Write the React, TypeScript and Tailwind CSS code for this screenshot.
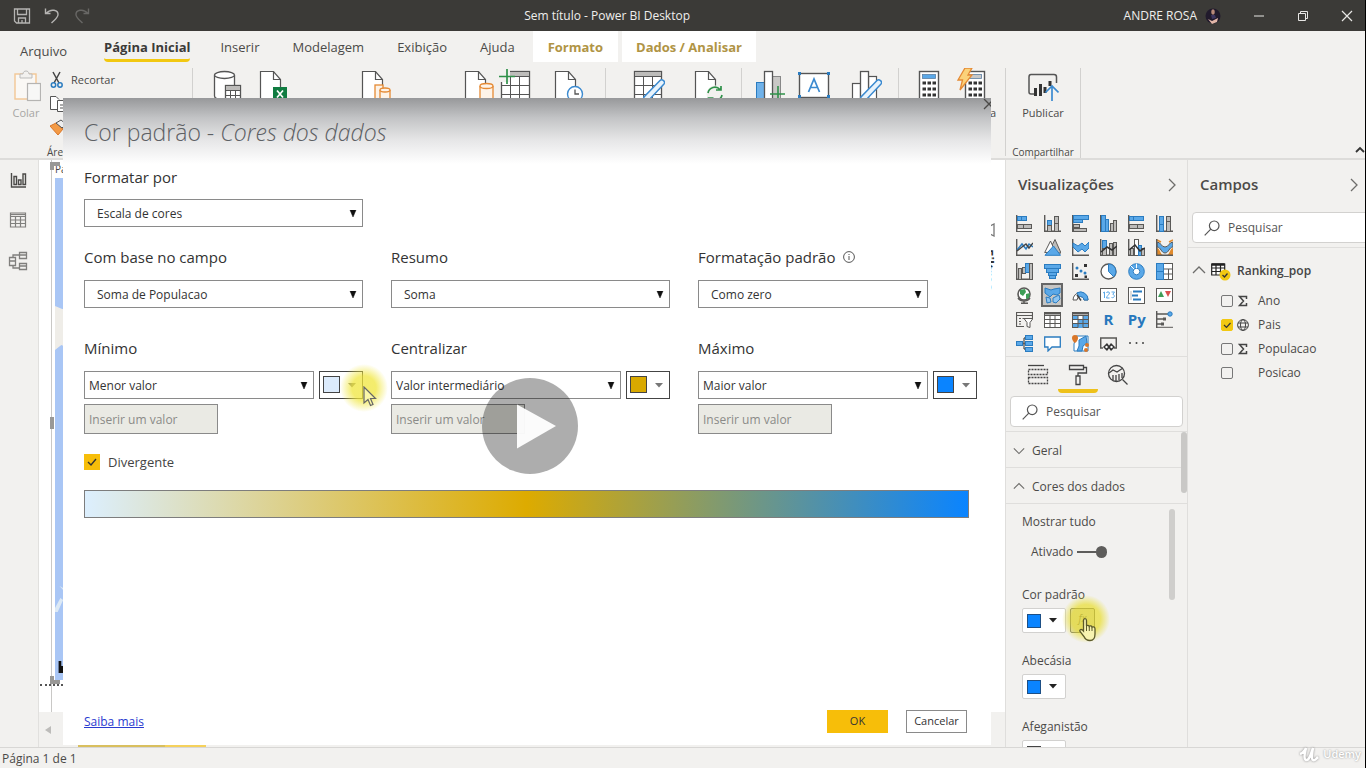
import React from "react";

const BLUE = "#5aa8e8";
const EDGE = "#2b7cc0";
const INK = "#5a5957";
const SOFT = "#bdbcba";

type BoxProps = { x: number; y: number; w: number; h: number; kind?: "blue" | "gray" | "none" };

function Box({ x, y, w, h, kind = "none" }: BoxProps) {
  const fill = kind === "blue" ? BLUE : kind === "gray" ? SOFT : "none";
  const stroke = kind === "blue" ? EDGE : INK;
  return <rect x={x + 0.5} y={y + 0.5} width={w - 1} height={h - 1} fill={fill} stroke={stroke} />;
}

function Axis({ full = true }: { full?: boolean }) {
  return <path d={full ? "M.7 0V16.3H17" : "M.7 0V17"} fill="none" stroke={INK} strokeWidth="1.4" />;
}

const visuals: { name: string; art?: React.ReactNode; glyph?: string }[] = [
  { name: "Barras empilhadas", art: <><Axis full={false} /><Box x={1} y={1} w={5} h={5} kind="blue" /><Box x={5} y={1} w={6} h={5} kind="blue" /><Box x={1} y={9} w={7} h={5} kind="gray" /><Box x={7} y={9} w={9} h={5} kind="gray" /><path d="M0 16.500h16" stroke={INK} /></> },
  { name: "Colunas empilhadas", art: <><Axis /><Box x={3} y={5} w={5} h={6} kind="blue" /><Box x={3} y={10} w={5} h={7} kind="gray" /><Box x={10} y={1} w={5} h={8} kind="gray" /><Box x={10} y={8} w={5} h={9} kind="gray" /></> },
  { name: "Barras clusterizadas", art: <><Axis full={false} /><Box x={1} y={0} w={16} h={5} kind="blue" /><Box x={1} y={4} w={10} h={4} kind="blue" /><Box x={1} y={9} w={7} h={4} kind="gray" /><Box x={1} y={13} w={14} h={4} kind="gray" /></> },
  { name: "Colunas clusterizadas", art: <><Axis /><Box x={1} y={0} w={5} h={17} kind="blue" /><Box x={5} y={4} w={4} h={13} kind="blue" /><Box x={10} y={8} w={4} h={9} kind="gray" /><Box x={13} y={5} w={4} h={12} kind="gray" /></> },
  { name: "Barras 100%", art: <><Axis full={false} /><Box x={1} y={1} w={5} h={5} kind="blue" /><Box x={5} y={1} w={11} h={5} kind="blue" /><Box x={1} y={9} w={9} h={5} kind="gray" /><Box x={9} y={9} w={7} h={5} kind="gray" /><path d="M0 16.500h16" stroke={INK} /></> },
  { name: "Colunas 100%", art: <><Axis /><Box x={3} y={1} w={5} h={9} kind="blue" /><Box x={3} y={9} w={5} h={8} kind="blue" /><Box x={10} y={1} w={5} h={6} kind="gray" /><Box x={10} y={6} w={5} h={11} kind="gray" /></> },

  { name: "Linhas", art: <><Axis /><path d="M1 11l5-6 4 5 3-5 4 3" fill="none" stroke={EDGE} strokeWidth="1.500" /><path d="M1 12l5-4 4-3 3 4 4-5" fill="none" stroke="#444" strokeWidth="1.400" /></> },
  { name: "Área", art: <><path d="M4 14L11 .5 17 14z" fill={SOFT} stroke={INK} /><path d="M.7 13.500L6.500 2l5 11z" fill="#fff" stroke={INK} /><path d="M1 16.300L9.500 7l7 9.300z" fill={BLUE} stroke={EDGE} /></> },
  { name: "Área empilhada", art: <><Axis /><path d="M1 4l5 3 4-3 3 3 4-4v6l-4 4-3-3-4 3-5-5z" fill={BLUE} stroke={EDGE} /></> },
  { name: "Linha e coluna empilhada", art: <><Axis /><Box x={2} y={1} w={5} h={9} kind="blue" /><Box x={2} y={9} w={5} h={8} kind="gray" /><Box x={9} y={4} w={4} h={13} kind="gray" /><Box x={13} y={3} w={4} h={14} kind="gray" /><path d="M1 13l6-5 5 3 5-4" fill="none" stroke="#333" strokeWidth="1.500" /></> },
  { name: "Linha e coluna clusterizada", art: <><Axis /><Box x={2} y={9} w={4} h={8} kind="gray" /><rect x="6.500" y=".5" width="4" height="16" fill="#fff" stroke={INK} /><Box x={10} y={6} w={4} h={11} kind="blue" /><Box x={13} y={9} w={4} h={8} kind="gray" /><path d="M1 11l6-5 5 6 5-3" fill="none" stroke="#333" strokeWidth="1.500" /></> },
  { name: "Faixa de opções", art: <><path d="M1 9v7h6c-3-1-3-7-6-7zM17 9v7h-6c3-1 3-7 6-7z" fill="#e08a2c" /><path d="M1 3c4 0 4 5 8 5s4-5 8-5v5c-4 0-4 6-8 6s-4-6-8-6z" fill={BLUE} stroke={INK} /><path d="M1 1l4 2M13 3l4-2" fill="none" stroke="#e08a2c" strokeWidth="1.500" /><Axis /></> },

  { name: "Cascata", art: <><Axis /><Box x={2} y={5} w={4} h={12} kind="gray" /><Box x={6} y={4} w={4} h={7} kind="gray" /><Box x={9} y={0} w={5} h={10} kind="blue" /><Box x={13} y={0} w={4} h={17} kind="gray" /></> },
  { name: "Funil", art: <><Box x={0} y={1} w={17} h={5} kind="blue" /><Box x={2} y={5} w={13} h={5} kind="blue" /><Box x={4} y={9} w={9} h={4} kind="blue" /><Box x={5} y={12} w={7} h={4} kind="blue" /></> },
  { name: "Dispersão", art: <><Axis /><g fill={EDGE}><circle cx="5" cy="5" r="1.500" /><circle cx="9" cy="8" r="1.500" /><circle cx="13" cy="10" r="1.500" /></g><g fill="#333"><rect x="12" y="1" width="3" height="3" /><rect x="3" y="11" width="3" height="3" /><rect x="12.500" y="12.500" width="2.500" height="2.500" /></g></> },
  { name: "Pizza", art: <><circle cx="8.500" cy="8.500" r="7.500" fill="#fff" stroke={INK} strokeWidth="1.300" /><path d="M8.500 1a7.500 7.500 0 0 1 5.300 12.800L8.500 8.500z" fill={BLUE} stroke={EDGE} /></> },
  { name: "Rosca", art: <><circle cx="8.500" cy="8.500" r="5.500" fill="none" stroke={BLUE} strokeWidth="4.500" /><circle cx="8.500" cy="8.500" r="7.800" fill="none" stroke={EDGE} /><circle cx="8.500" cy="8.500" r="3.300" fill="#fff" stroke={EDGE} /><path d="M3 3l3 3M8.500 .7V5" stroke="#fff" /></> },
  { name: "Treemap", art: <><rect x=".5" y=".5" width="16" height="16" fill="#fff" stroke={INK} /><Box x={0} y={0} w={8} h={9} kind="blue" /><Box x={0} y={8} w={8} h={9} kind="blue" /><path d="M8 6h9M8 11h9M12.500 6v11" stroke={INK} /></> },

  { name: "Mapa", art: <><circle cx="8" cy="7" r="6" fill="#fff" stroke={INK} strokeWidth="1.600" /><path d="M4 3l5-1 1 3-3 4-3-2zM10 7l4-1-1 5-3 1z" fill="#3f9e57" /><path d="M2 11c3 4 9 4 12 0M8 14v2M5 16.300h7" fill="none" stroke={INK} strokeWidth="1.500" /></> },
  { name: "Mapa coroplético", art: <><path d="M1 1l6 2 3-1 6-1v5l-3 2-4-1-3 3-5-4z" fill={BLUE} stroke={EDGE} /><path d="M2 10l4 1 1 4-4 1zM9 11l6-3 1 4-4 4-3-1z" fill="#8cc4f2" stroke={EDGE} /></> },
  { name: "Medidor", art: <><path d="M1 13a7.500 7.500 0 0 1 15 0h-4a3.500 3.500 0 0 0-7 0z" fill="#fff" stroke={INK} /><path d="M5 5.800A7.500 7.500 0 0 1 16 13h-4a3.500 3.500 0 0 0-5.200-3z" fill={BLUE} stroke={EDGE} /><path d="M9 13.500L5 8" stroke="#444" strokeWidth="1.500" /></> },
  { name: "Cartão", art: <><rect x=".5" y="1.500" width="16" height="13" fill="#fff" stroke={INK} /><path d="M3 6l1.500-1v6M6.500 6c0-1.500 3-1.500 3 0 0 1.500-3 3-3 5h3M11.500 5h3l-1.700 2.300c2.700.7 1.700 4.200-1.300 3.200" fill="none" stroke="#5aa8e8" /></> },
  { name: "Cartão de linha múltipla", art: <><rect x=".5" y=".5" width="16" height="16" fill="#fff" stroke={INK} /><path d="M3 4v9" stroke={SOFT} /><path d="M5 4.500h9M4 8.500h6M5 12.500h8" stroke={EDGE} strokeWidth="2" /></> },
  { name: "KPI", art: <><rect x=".5" y="1.500" width="16" height="13" fill="#fff" stroke={INK} /><path d="M2 10l3-6 3 6z" fill="#3f9e57" /><path d="M9 4h6l-3 6z" fill="#d9534f" /></> },

  { name: "Segmentação", art: <><path d="M16.500 7V1.500H.5v14H8" fill="none" stroke={INK} strokeWidth="1.200" /><path d="M.5 4.500h16M3 7.500h2M6.500 7.500h3M3 10.500h2M3 13h2" stroke={INK} /><path d="M8 7.500h9l-3 4v5l-3-1v-4z" fill="#fff" stroke={INK} /></> },
  { name: "Tabela", art: <><rect x=".5" y="1.500" width="16" height="15" fill="#fff" stroke={INK} /><path d="M.5 4.500h16M.5 8.500h16M.5 12.500h16M6 4.500v12M11 4.500v12" stroke={INK} /><path d="M.5 2.500h16" stroke={INK} strokeWidth="2" /></> },
  { name: "Matriz", art: <><rect x=".5" y="1.500" width="16" height="15" fill="#fff" stroke={INK} /><path d="M1 5h5v4H1zM6 9h5v8H6zM11 5h5v11h-5zM1 12h5v4H1z" fill={BLUE} /><path d="M.5 4.500h16M.5 8.500h16M.5 12.500h16M6 4.500v12M11 4.500v12" stroke={INK} /><path d="M.5 2.500h16" stroke={INK} strokeWidth="2" /></> },
  { name: "Visual R", glyph: "R" },
  { name: "Visual Python", glyph: "Py" },
  { name: "Influenciadores", art: <><Axis full={false} /><path d="M1 3h12M1 8h7M1 13h5" stroke={INK} strokeWidth="1.500" /><circle cx="14" cy="3" r="2.200" fill={BLUE} stroke={EDGE} /><rect x="7" y="6.500" width="3" height="3" fill={INK} /><rect x="5" y="11.500" width="3" height="3" fill={INK} /><path d="M1 16.300h16" stroke={INK} /></> },

  { name: "Árvore hierárquica", art: <><path d="M5 8.500h6M8 3v11M8 3h3M8 14h3" fill="none" stroke={INK} strokeWidth="1.300" /><Box x={0} y={6} w={7} h={5} kind="blue" /><Box x={9} y={0} w={8} h={5} kind="blue" /><Box x={9} y={6} w={8} h={5} kind="blue" /><Box x={9} y={12} w={8} h={5} kind="blue" /></> },
  { name: "P e R", art: <path d="M.7 2h15.600v10H8l-4 4v-4H.7z" fill="#fff" stroke={EDGE} strokeWidth="1.300" /> },
  { name: "ArcGIS", art: <><path d="M4 1h12v15H2V9z" fill="#fff" stroke={EDGE} /><path d="M7 5l7-4 1 7-4 3-1 5H5l2-5z" fill={BLUE} stroke={EDGE} /><path d="M3 8C-1 5-1 0 3 0s4 5 0 8z" fill="#d9772a" /><circle cx="15" cy="10" r="2" fill="#d9772a" /><circle cx="14" cy="15" r="2" fill="#d9772a" /></> },
  { name: "Power Apps", art: <><path d="M3 13H.7V3h15.600v10H14" fill="none" stroke={INK} strokeWidth="1.500" /><path d="M3 12l4-4 3 4-3 4zM8 12l3-4 4 4-4 4z" fill="#333" /><circle cx="6.500" cy="12" r="1.200" fill="#fff" /><circle cx="11.500" cy="12" r="1.200" fill="#fff" /></> },
  { name: "Mais opções", art: <g fill="#444"><circle cx="2" cy="8" r="1" /><circle cx="8.500" cy="8" r="1" /><circle cx="15" cy="8" r="1" /></g> },
];

function Chevron({ dir, className }: { dir: "up" | "down" | "right"; className?: string }) {
  const d = dir === "up" ? "M1 9l6-6 6 6" : dir === "down" ? "M1 4l6 6 6-6" : "M4 1l6 6-6 6";
  return (
    <svg viewBox="0 0 14 14" className={className ?? "h-3.5 w-3.5"} fill="none" stroke="#6e6d6b" strokeWidth="1.3" aria-hidden="true">
      <path d={d} />
    </svg>
  );
}

function SearchIcon() {
  return (
    <svg viewBox="0 0 16 16" className="h-4 w-4 shrink-0" fill="none" stroke="#555" strokeWidth="1.2" aria-hidden="true">
      <circle cx="10.200" cy="5.800" r="4.800" />
      <path d="M6.800 9.200L.7 15.300" />
    </svg>
  );
}

function Sheet({ children }: { children?: React.ReactNode }) {
  return (
    <>
      <path d="M2.500 40V3.500h13l7 8V40" fill="#fff" stroke="#555" strokeWidth="1.200" />
      <path d="M15.500 3.500v8h7" fill="none" stroke="#555" strokeWidth="1.200" />
      {children}
    </>
  );
}

function Cylinder() {
  return (
    <g fill="#fdf3e8" stroke="#e58a34" strokeWidth="1.300">
      <path d="M17 18v16h13V18" />
      <ellipse cx="23.500" cy="18" rx="6.500" ry="2.500" />
    </g>
  );
}

function GridArt({ x, y, w, h, cell }: { x: number; y: number; w: number; h: number; cell: number }) {
  const cols = Array.from({ length: Math.floor(w / cell) }, (_, i) => x + i * cell);
  const rows = Array.from({ length: Math.floor(h / cell) }, (_, i) => y + 5 + i * cell);
  return (
    <g stroke="#555" fill="none">
      <rect x={x} y={y} width={w} height={h} fill="#fff" strokeWidth="1.300" />
      <rect x={x} y={y} width={w} height="5" fill="#bdbcba" />
      {cols.map((c) => <path key={c} d={`M${c} ${y + 5}V${y + h}`} />)}
      {rows.map((r) => <path key={r} d={`M${x} ${r}H${x + w}`} />)}
    </g>
  );
}

function Pencil() {
  return <path d="M27 12.500c2-2 6 1 4 3.500L15 33l-6 3 2-7z" fill="#e8f3fc" stroke="#3b8ad0" strokeWidth="1.500" />;
}

function Calculator({ x, top }: { x: number; top: string }) {
  return (
    <>
      <rect x={x} y="3.500" width="19" height="36" fill="#fff" stroke="#555" strokeWidth="1.400" />
      <rect x={x + 3} y="6.500" width="13" height="4" fill={top} stroke="#5b7fa3" strokeWidth=".8" />
      {[13.5, 19.5, 25.5].map((y) => [3, 8, 13].map((dx) => <rect key={`${y}-${dx}`} x={x + dx} y={y} width="3.500" height="3" fill="#333" />))}
    </>
  );
}

const tools: { name: string; gap: string; art: React.ReactNode; divider?: string; label?: string }[] = [
  { name: "Obter dados", gap: "ml-[19px]", art: <><path d="M2.500 7v21c0 5 20 5 20 0V7" fill="#fff" stroke="#555" strokeWidth="1.300" /><ellipse cx="12.500" cy="7" rx="10" ry="3.500" fill="#fff" stroke="#555" strokeWidth="1.300" /><GridArt x={13.5} y={17.5} w={15} h={18} cell={5} /></> },
  { name: "Excel", gap: "ml-3.5", art: <Sheet><rect x="15" y="19" width="14" height="14" fill="#107c41" /><path d="M19 22.500l6 7M25 22.500l-6 7" stroke="#fff" strokeWidth="1.700" /></Sheet> },
  { name: "Conjuntos de dados", gap: "ml-[70px]", art: <Sheet><g fill="#fdf3e8" stroke="#e58a34" strokeWidth="1.300"><rect x="15" y="17" width="8" height="14" /><path d="M20 22v12h10V22" /><ellipse cx="25" cy="22" rx="5" ry="2" /></g></Sheet> },
  { name: "SQL Server", gap: "ml-[71px]", art: <Sheet><Cylinder /></Sheet> },
  { name: "Inserir dados", gap: "ml-1", art: <><GridArt x={2.5} y={3.5} w={28} h={32} cell={9} /><rect x="0" y="2" width="11" height="12" fill="#f2f1ef" /><path d="M8 1v15M0 8.500h16" stroke="#2f9149" strokeWidth="1.700" /></> },
  { name: "Fontes recentes", gap: "ml-[22px]", art: <Sheet><circle cx="22" cy="26" r="7.500" fill="#fff" stroke="#3b8ad0" strokeWidth="1.400" /><path d="M22 21.500V26h4" fill="none" stroke="#555" strokeWidth="1.300" /></Sheet>, divider: "ml-5" },
  { name: "Transformar dados", gap: "ml-[27px]", art: <><GridArt x={1.5} y={3.5} w={27} h={32} cell={9} /><Pencil /></> },
  { name: "Atualizar", gap: "ml-7", art: <Sheet><circle cx="22" cy="26" r="8.500" fill="#f2f1ef" /><path d="M15 25a7 7 0 0 1 12-3.500M29 27a7 7 0 0 1-12 3.500M28 18v4h-5M15.500 34v-4h5" fill="none" stroke="#2f9149" strokeWidth="1.700" /></Sheet>, divider: "ml-4" },
  { name: "Novo visual", gap: "ml-3", art: <><rect x="2.500" y="14.500" width="8" height="20" fill="#6fb2ea" stroke="#2b7cc0" /><rect x="18.500" y="8.500" width="8" height="26" fill="#c9c8c6" stroke="#888" /><rect x="10.500" y="3.500" width="8" height="32" fill="#fff" stroke="#555" strokeWidth="1.300" /><path d="M24 18v15M16 26h15" stroke="#2f9149" strokeWidth="1.600" /></> },
  { name: "Caixa de texto", gap: "ml-3", art: <><rect x="1.500" y="5.500" width="29" height="24" fill="#fff" stroke="#555" strokeWidth="1.400" /><path d="M10.500 24l5.500-13 5.500 13M12.500 19.500h7" fill="none" stroke="#3b8ad0" strokeWidth="1.700" /><g fill="#2b7cc0"><rect y="4" width="3" height="3" /><rect x="29" y="4" width="3" height="3" /><rect y="27" width="3" height="3" /><rect x="29" y="27" width="3" height="3" /></g></> },
  { name: "Mais visuais", gap: "ml-5", art: <><rect x="2.500" y="15.500" width="8" height="20" fill="#fff" stroke="#555" strokeWidth="1.200" /><rect x="18.500" y="8.500" width="8" height="26" fill="#fff" stroke="#555" strokeWidth="1.200" /><rect x="10.500" y="3.500" width="8" height="32" fill="#fff" stroke="#555" strokeWidth="1.300" /><Pencil /></>, divider: "ml-4" },
  { name: "Nova medida", gap: "ml-3.5", art: <Calculator x={6.5} top="#5aa8e8" /> },
  { name: "Medida rápida", gap: "ml-[11px]", art: <><Calculator x={9.5} top="#c9c8c6" /><path d="M9 0h7l-4 7h4L4 22l2.500-10H2z" fill="#fbd27a" stroke="#e58a34" strokeWidth="1.300" /></>, divider: "ml-[9px]", label: "rápida" },
];

const tabs = ["Inserir", "Modelagem", "Exibição", "Ajuda"];

function TitleBar() {
  return (
    <header className="flex h-[31px] shrink-0 items-center bg-[#3b3a37] text-[12px] text-[#efeeec]">
      <div className="flex w-[38.400%] items-center gap-3 pl-[13px]">
        <button aria-label="Salvar">
          <svg viewBox="0 0 18 18" className="h-[18px] w-[18px]" fill="none" stroke="#b5b4b2" strokeWidth="1.300"><path d="M1.500 2h15v14h-13l-2-2zM4.500 2v5.500h9V2M5.500 16v-5h7v5M9 13v2.500" /></svg>
        </button>
        <button aria-label="Desfazer">
          <svg viewBox="0 0 18 18" className="h-[18px] w-[18px]" fill="none" stroke="#b5b4b2" strokeWidth="1.400"><path d="M2.500 1.500v5h5M3 6.500C8 1 15.500 3 15 8c-.5 3-3 4.500-6.500 8" /></svg>
        </button>
        <button aria-label="Refazer">
          <svg viewBox="0 0 18 18" className="h-[18px] w-[18px]" fill="none" stroke="#686765" strokeWidth="1.400"><path d="M15.500 1.500v5h-5M15 6.500C10 1 2.500 3 3 8c.5 3 3 4.500 6.500 8" /></svg>
        </button>
      </div>
      <h1>Sem título - Power BI Desktop</h1>
      <div className="flex flex-1 items-center justify-end">
        <span>ANDRE ROSA</span>
        <svg viewBox="0 0 16 16" className="ml-2 h-4 w-4" aria-hidden="true"><circle cx="8" cy="8" r="7.500" fill="#211a2c" /><ellipse cx="8" cy="4" rx="1.800" ry="2.800" fill="#b98a7a" /><path d="M3 11l4 2 6-3-1 4-5 2z" fill="#e3b7a8" /><path d="M6 7h4l1 3-4 1z" fill="#3d3560" /></svg>
        <button aria-label="Minimizar" className="ml-8"><svg viewBox="0 0 12 12" className="h-3 w-3"><path d="M1 6h10" stroke="#e8e7e5" /></svg></button>
        <button aria-label="Restaurar" className="ml-8"><svg viewBox="0 0 12 12" className="h-3 w-3" fill="none" stroke="#e8e7e5"><path d="M1.500 3.500h7v7h-7zM3.500 3.500v-2h7v7h-2" /></svg></button>
        <button aria-label="Fechar" className="ml-8 mr-3"><svg viewBox="0 0 12 12" className="h-3 w-3" fill="none" stroke="#e8e7e5" strokeWidth="1.200"><path d="M1 1l10 10M11 1L1 11" /></svg></button>
      </div>
    </header>
  );
}

function Tabs() {
  return (
    <nav className="flex h-[34px] shrink-0 items-start text-[13px] leading-8 text-[#4b4a48]">
      <button className="ml-5 pt-1">Arquivo</button>
      <button className="ml-[37px] h-[31px] rounded-sm border-b-[3px] border-[#f2c811] font-bold leading-8 text-[#3b3a38]">Página Inicial</button>
      <div className="ml-[30px] flex gap-[33px]">
        {tabs.map((t) => <button key={t}>{t}</button>)}
      </div>
      <button className="ml-[18px] h-[31px] bg-white px-[15px] font-bold text-[#b09445]">Formato</button>
      <button className="ml-1 h-[31px] bg-white px-3.5 font-bold text-[#b09445]">Dados / Analisar</button>
    </nav>
  );
}

function Ribbon() {
  return (
    <section aria-label="Faixa de opções" className="flex h-[95px] shrink-0 border-b-2 border-[#dddcda] pt-[3px] text-[11px] text-[#4b4a48]">
      <div className="flex w-[192px] shrink-0 flex-col">
        <div className="flex h-[78px] pl-2.5">
          <button className="flex w-8 flex-col items-center text-[11px] text-[#a7a6a4]">
            <svg viewBox="0 0 30 34" className="h-[34px] w-[30px] shrink-0" aria-hidden="true"><rect x="4" y="6" width="21" height="25" fill="#faf8f5" stroke="#f3c795" strokeWidth="1.400" /><path d="M9 10V6h3c0-4 6-4 6 0h3v4z" fill="#f2f1ef" stroke="#bbb" /><rect x="16.500" y="15.500" width="13" height="17" fill="#f7f7f6" stroke="#b5b4b2" strokeWidth="1.200" /></svg>
            <span className="leading-[22px]">Colar</span>
          </button>
          <div className="flex flex-col gap-1.5 pl-2 pt-[3px]">
            <button className="flex h-[18px] items-center gap-[7px]">
              <svg viewBox="0 0 14 18" className="h-[18px] w-3.5" fill="none" aria-hidden="true"><path d="M3 1l6 11M10 1L4 12" stroke="#444" strokeWidth="1.500" /><circle cx="3.500" cy="14" r="2.200" stroke="#2b7cc0" strokeWidth="1.500" /><circle cx="10" cy="14" r="2.200" stroke="#2b7cc0" strokeWidth="1.500" /></svg>
              Recortar
            </button>
            <button aria-label="Copiar" className="h-[18px]"><svg viewBox="0 0 18 18" className="h-[18px] w-[18px]" fill="#fff" stroke="#555"><path d="M7 14.500H.5V1.500H6l3 3" /><path d="M7.500 5.500h6l3 3v8h-9zM10 10h4M10 13h4" /></svg></button>
            <button aria-label="Pincel de formatação" className="h-[18px]"><svg viewBox="0 0 18 18" className="h-[18px] w-[18px]"><path d="M0 7l6-3 7 6-5 6z" fill="#f39a45" stroke="#d9772a" /><path d="M6 4l5-3 5 4-4 4z" fill="#eee" stroke="#555" /></svg></button>
          </div>
        </div>
        <span className="pl-[47px] text-[10px] leading-3">Área</span>
      </div>
      <div className="w-px bg-[#d2d1cf]" />
      <div className="flex">
        {tools.map((t) => (
          <React.Fragment key={t.name}>
            <button aria-label={t.name} className={t.label ? `${t.gap} flex w-10 shrink-0 flex-col items-start` : `${t.gap} h-9 w-8 shrink-0`}>
              <svg viewBox="0 0 32 36" className="h-9 w-8 shrink-0" aria-hidden="true">{t.art}</svg>
              {t.label && <span className="self-end leading-[18px]">{t.label}</span>}
            </button>
            {t.divider && <div className={`${t.divider} h-[88px] w-px bg-[#d2d1cf]`} />}
          </React.Fragment>
        ))}
      </div>
      <div className="flex h-[90px] w-[75px] shrink-0 flex-col items-center justify-between border-r border-[#d2d1cf]">
        <button className="flex flex-col items-center">
          <svg viewBox="0 0 32 34" className="h-[34px] w-8" fill="none" aria-hidden="true"><path d="M7 26H4c-1.500 0-2-1-2-2V9c0-1.500 1-2.500 2-2.500h23c1.500 0 2.500 1 2.500 2.500v6" stroke="#555" strokeWidth="1.500" /><path d="M8.500 20v8M13.500 16v12M18 19v6M23 13v5" stroke="#333" strokeWidth="3" /><path d="M25 33V18M18.500 24.500L25 18l6.500 6.500" stroke="#3b8ad0" strokeWidth="1.700" /></svg>
          <span className="leading-[22px]">Publicar</span>
        </button>
        <span className="text-[10px] leading-3">Compartilhar</span>
      </div>
      <div className="flex flex-1 items-end justify-end pb-1">
        <button aria-label="Recolher faixa"><svg viewBox="0 0 10 8" className="h-2 w-2.5" fill="none" stroke="#333" strokeWidth="1.800"><path d="M1 6l4-4 4 4" /></svg></button>
      </div>
    </section>
  );
}

function LeftRail() {
  return (
    <nav aria-label="Exibições" className="flex w-[39px] shrink-0 flex-col items-center gap-[22px] border-r border-[#e1e0de] bg-[#f2f1ef] pr-0.5 pt-[11px]">
      <button aria-label="Relatório"><svg viewBox="0 0 18 18" className="h-[18px] w-[18px]" fill="none" stroke="#4b4a48" strokeWidth="1.400"><path d="M2.500 2v14H17M5 5.500h2.500v8H5zM9.500 9h2.500v4.500H9.500zM14 3h2.500v10.500H14z" /></svg></button>
      <button aria-label="Dados"><svg viewBox="0 0 18 18" className="h-[18px] w-[18px]" fill="none" stroke="#807f7d" strokeWidth="1.200"><path d="M1.500 2h15v14h-15zM1.500 5.500h15M1.500 9h15M1.500 12.500h15M6.500 5.500V16M11.500 5.500V16" /><path d="M1.500 3.500h15" /></svg></button>
      <button aria-label="Modelo"><svg viewBox="0 0 20 20" className="h-5 w-5" fill="none" stroke="#807f7d" strokeWidth="1.300"><path d="M1.500 6.500h6v8h-6zM1.500 10h6M11.500 1.500h7v6h-7zM11.500 4h7M11.500 12.500h7v6h-7zM11.500 15h7M5 6.500V4h6.500M5 14.500V17h6.500" /></svg></button>
    </nav>
  );
}

function Canvas() {
  return (
    <main className="flex min-w-0 flex-1 flex-col bg-white">
      <div className="flex min-h-0 flex-1">
        <div className="relative ml-3 flex w-10 flex-col border-l border-[#c9c8c6]">
          <span className="pl-[3px] text-[10px] leading-[18px] text-[#444]">País</span>
          <svg viewBox="0 0 40 502" preserveAspectRatio="none" className="ml-[3px] h-[502px] w-9 shrink-0 bg-[#a9c6f5]" aria-hidden="true">
            <path d="M0 128l8 3 32 2v36H12l-5-2-7 5z" fill="#efede8" />
            <path d="M0 430l6-10 3 2-6 12H0zM5 408l4 2v2z" fill="#dce9f5" />
            <path d="M4 483v12h8v-7H7v-5z" fill="#111" />
          </svg>
          <div className="-ml-3 mt-1 border-t-2 border-dotted border-[#555]" />
          <span className="absolute -left-0.5 top-0.5 h-2 w-2.5 border-l-4 border-t-4 border-[#999896]" />
          <span className="absolute -left-0.5 top-[257px] h-3 w-1 bg-[#999896]" />
          <span className="absolute -left-0.5 top-[516px] h-2 w-2.5 border-b-4 border-l-4 border-[#999896]" />
        </div>
        <div className="ml-auto flex w-8 flex-col items-center pt-[63px] text-[#333]">
          <svg viewBox="0 0 14 14" className="h-3.5 w-3.5" fill="none" stroke="#777" strokeWidth="1.300" aria-hidden="true"><path d="M1 5h3l8-4v12L4 9H1z" /></svg>
          <span className="mt-3 text-[13px] font-bold leading-4 [writing-mode:vertical-rl]">Filtros</span>
        </div>
      </div>
      <div className="flex h-[35px] shrink-0 items-center bg-[#f2f1ef] pl-1.5">
        <svg viewBox="0 0 6 8" className="h-2 w-1.5"><path d="M6 0v8L0 4z" fill="#bdbcba" /></svg>
      </div>
    </main>
  );
}

function SideSearch({ id, wide }: { id: string; wide?: boolean }) {
  return (
    <label htmlFor={id} className={`flex h-[31px] shrink-0 items-center gap-2 rounded-sm border border-[#d2d1cf] bg-white pl-[11px] ${wide ? "-mr-1 ml-1" : "mx-1"}`}>
      <SearchIcon />
      <input id={id} type="text" placeholder="Pesquisar" className="w-full min-w-0 bg-transparent text-[12px] text-[#444] outline-none placeholder:text-[#555]" />
    </label>
  );
}

function Swatch({ color, label }: { color: string; label: string }) {
  return (
    <button aria-label={label} className="flex h-[25px] w-11 items-center gap-2 rounded-xs border border-[#d2d1cf] bg-white pl-1">
      <span className={`h-3.5 w-3.5 border ${color}`} />
      <svg viewBox="0 0 8 5" className="h-[5px] w-2"><path d="M0 0h8L4 4.500z" fill="#222" /></svg>
    </button>
  );
}

function Visualizations() {
  return (
    <aside className="flex w-[183px] shrink-0 flex-col border-x border-[#dfdedc] bg-[#f2f1ef] text-[12px] text-[#4b4a48]">
      <div className="flex h-[51px] shrink-0 items-center justify-between pb-0.5 pl-3 pr-2">
        <h2 className="text-[15px] font-semibold">Visualizações</h2>
        <Chevron dir="right" />
      </div>
      <div className="grid shrink-0 grid-cols-6 border-b border-[#dfdedc] pb-px pl-1 pr-2">
        {visuals.map((v) => (
          <button key={v.name} aria-label={v.name} className={v.name === "Mapa coroplético" ? "m-auto flex h-6 w-[22px] items-center justify-center border-2 border-[#666] bg-[#c6c5c3]" : "flex h-6 items-center justify-center"}>
            {v.glyph
              ? <span className="text-[15px] font-bold leading-5 text-[#2878bd]">{v.glyph}</span>
              : <svg viewBox="0 0 17 17" className="h-[17px] w-[17px] shrink-0">{v.art}</svg>}
          </button>
        ))}
      </div>
      <div className="flex h-[39px] shrink-0 pl-3">
        <button aria-label="Campos" className="flex h-[36px] w-10 items-center justify-center"><svg viewBox="0 0 22 22" className="h-[22px] w-[22px]" fill="none" stroke="#444" strokeWidth="1.300"><path d="M1 1.500h16" /><path d="M1.500 5.500h19v5h-19zM1.500 13.500h19v6h-19z" strokeDasharray="2 1" /></svg></button>
        <button aria-label="Formato" className="flex h-[36px] w-10 items-center justify-center rounded-sm border-b-4 border-[#eec11a] pt-1"><svg viewBox="0 0 20 22" className="h-[22px] w-5" fill="none" stroke="#444" strokeWidth="1.300"><path d="M1.500 1.500h14v4h-14zM15.500 3.500h3V9H10v3M8 12h4v8.500H8z" /></svg></button>
        <button aria-label="Análise" className="flex h-[36px] w-10 items-center justify-center"><svg viewBox="0 0 22 22" className="h-[22px] w-[22px]" fill="none" stroke="#444" strokeWidth="1.300"><circle cx="9.500" cy="9.500" r="8" /><path d="M15.500 15.500l5 5M2 9l4-3 4 2 6-4M6 16v-5M9 17v-6M12 16v-6M15 14V9" /></svg></button>
      </div>
      <SideSearch id="search-format" />
      <div className="relative mt-1 flex min-h-0 flex-1 flex-col overflow-hidden border-t border-[#dfdedc]">
        <button className="flex h-9 shrink-0 items-center gap-[7px] border-b border-[#dfdedc] pl-[7px] pt-0.5"><Chevron dir="down" className="h-3 w-3" />Geral</button>
        <button className="flex h-9 shrink-0 items-center gap-[7px] border-b border-[#dfdedc] pl-[7px] pt-0.5"><Chevron dir="up" className="h-3 w-3" />Cores dos dados</button>
        <div className="flex flex-col pl-4 pt-2">
          <span className="leading-5">Mostrar tudo</span>
          <label className="mt-2.5 flex items-center gap-1 pl-[9px] leading-5">
            Ativado
            <span className="relative flex h-3 w-[30px] items-center">
              <input type="checkbox" role="switch" defaultChecked className="absolute inset-0 appearance-none" />
              <span className="h-0.5 w-5 bg-[#5e5d5b]" />
              <span className="h-3 w-3 rounded-full bg-[#5e5d5b]" />
            </span>
          </label>
          <span className="mt-[23px] leading-5">Cor padrão</span>
          <div className="mt-[3px] flex gap-1">
            <Swatch color="border-[#1d4f85] bg-[#0a84ff]" label="Cor padrão" />
            <div className="relative">
              <button aria-label="Formatação condicional" className="h-[25px] w-[25px] rounded-xs border border-[#777] bg-[#dcdad0] pb-1 text-[10px] italic text-[#777]">fx</button>
              <span className="pointer-events-none absolute -left-2 -top-[13px] h-12 w-12 rounded-full bg-[radial-gradient(closest-side,rgba(232,220,30,0.65)_60%,rgba(232,220,30,0)_100%)]" />
              <svg viewBox="0 0 20 26" className="pointer-events-none absolute left-2 top-[9px] h-[26px] w-5" aria-hidden="true"><path d="M5.500 14V3.500c0-2.500 3-2.500 3 0V9c.5-1 2.500-.8 2.800.5.700-1 2.500-.6 2.700.7.800-.8 3-.3 3 1.500V17c0 4-2 6.500-5 6.500s-5-1.500-6-4L2 14.500c-1-2 1.500-3 3.500-.5z" fill="#f7f3b0" stroke="#5b5a2a" strokeWidth="1.300" /><path d="M8.500 9v5M11.300 9.500V14M14 10.500V14" stroke="#5b5a2a" /></svg>
            </div>
          </div>
          <span className="mt-[18px] leading-5">Abecásia</span>
          <div className="mt-[3px]"><Swatch color="border-[#1d4f85] bg-[#0a84ff]" label="Abecásia" /></div>
          <span className="mt-[18px] leading-5">Afeganistão</span>
          <div className="mt-[3px]"><Swatch color="border-[#444] bg-[#555]" label="Afeganistão" /></div>
        </div>
        <span className="absolute right-0 top-0 h-[61px] w-1.5 rounded-full bg-[#c9c8c6]" />
        <span className="absolute right-3 top-[77px] h-[91px] w-1.5 rounded-full bg-[#cfcecc]" />
      </div>
    </aside>
  );
}

const fields = [
  { name: "Ano", icon: "sum", on: false },
  { name: "Pais", icon: "globe", on: true },
  { name: "Populacao", icon: "sum", on: false },
  { name: "Posicao", icon: "", on: false },
];

function Fields() {
  return (
    <aside className="flex w-[177px] shrink-0 flex-col overflow-hidden bg-[#f2f1ef] text-[12px] text-[#4b4a48]">
      <div className="flex h-[51px] shrink-0 items-center justify-between pb-0.5 pl-3 pr-1">
        <h2 className="text-[15px] font-semibold">Campos</h2>
        <Chevron dir="right" />
      </div>
      <div className="pt-px"><SideSearch id="search-fields" wide /></div>
      <div className="mt-1 border-t border-[#dfdedc] pt-[11px]">
        <button className="flex h-6 items-center pl-1 font-semibold text-[#444]">
          <Chevron dir="up" />
          <svg viewBox="0 0 20 20" className="ml-[5px] h-5 w-5" aria-hidden="true"><path d="M.7 3h13v11H.7zM.7 7h13M.7 10.500h13M5 4v10M9.500 4v10" fill="#fff" stroke="#222" strokeWidth="1.200" /><path d="M.7 3.500h13" stroke="#222" strokeWidth="2.500" /><circle cx="14" cy="14" r="5.500" fill="#f2c811" /><path d="M11.500 14l2 2 3-3.500" fill="none" stroke="#333" strokeWidth="1.300" /></svg>
          <span className="ml-1.5">Ranking_pop</span>
        </button>
        <div className="mt-1.5 flex flex-col pl-[33px]">
          {fields.map((f) => (
            <label key={f.name} className="flex h-6 items-center">
              <span className="relative flex h-3 w-3">
                <input type="checkbox" defaultChecked={f.on} className="h-3 w-3 appearance-none rounded-xs border border-[#777] checked:border-[#f2c811] checked:bg-[#f2c811]" />
                {f.on && <svg viewBox="0 0 12 12" className="pointer-events-none absolute inset-0"><path d="M3 6l2.500 2.500L9.500 4" fill="none" stroke="#333" strokeWidth="1.200" /></svg>}
              </span>
              <span className="ml-1 flex w-4 justify-start">
                {f.icon === "sum" && <svg viewBox="0 0 12 12" className="h-3 w-3" fill="none" stroke="#444" strokeWidth="1.500"><path d="M9.500 4V1.500H2.500L6.500 6l-4 4.500h7V8" /></svg>}
                {f.icon === "globe" && <svg viewBox="0 0 12 12" className="h-3 w-3" fill="none" stroke="#444"><circle cx="6" cy="6" r="5.400" /><ellipse cx="6" cy="6" rx="2.500" ry="5.400" /><path d="M1 4h10M1 8h10" /></svg>}
              </span>
              <span className="ml-[5px]">{f.name}</span>
            </label>
          ))}
        </div>
      </div>
    </aside>
  );
}

function Select({ id, value, tight, className }: { id: string; value: string; tight?: boolean; className: string }) {
  return (
    <div className={`relative ${className}`}>
      <select id={id} defaultValue={value} className={`block h-[28px] w-full appearance-none border border-[#8a8a8a] bg-white pt-0.5 text-[12px] text-[#333] ${tight ? "pl-1" : "pl-3"}`}>
        <option>{value}</option>
      </select>
      <svg viewBox="0 0 8 7" className="pointer-events-none absolute right-1.5 top-[11px] h-[7px] w-2" aria-hidden="true"><path d="M1 0h6L4 7z" fill="#111" stroke="#111" strokeWidth=".5" /></svg>
    </div>
  );
}

const stops = [
  { id: "minimo", label: "Mínimo", value: "Menor valor", color: "bg-[#dcebfc]" },
  { id: "centro", label: "Centralizar", value: "Valor intermediário", color: "bg-[#d9a900]" },
  { id: "maximo", label: "Máximo", value: "Maior valor", color: "bg-[#0a84ff]" },
];

const labelClass = "block text-[15px] leading-6 text-[#333]";

function Dialog() {
  return (
    <div role="dialog" aria-labelledby="dialog-title" className="absolute bottom-[23px] left-[63px] right-[374px] top-[98px] flex flex-col overflow-hidden bg-white bg-[linear-gradient(to_bottom,#97989a_0,#c3c4c6_20px,#e6e6e7_42px,#ffffff_66px)] bg-[length:100%_66px] bg-no-repeat pb-3 pl-[21px] pr-3.5">
      <button aria-label="Fechar caixa de diálogo" className="absolute -right-1 top-0"><svg viewBox="0 0 12 12" className="h-3 w-3" fill="none" stroke="#4b4a48" strokeWidth="1.300"><path d="M1 1l10 10M11 1L1 11" /></svg></button>
      <h2 id="dialog-title" className="mt-[18px] text-[23px] font-light leading-8 text-[#5d6064]">Cor padrão - <em>Cores dos dados</em></h2>
      <div className="mt-[17px] grid grid-cols-3 gap-x-7">
        <div className="flex flex-col gap-2.5">
          <label htmlFor="formatar" className={labelClass}>Formatar por</label>
          <Select id="formatar" value="Escala de cores" className="w-full" />
        </div>
      </div>
      <div className="mt-[18px] grid grid-cols-3 gap-x-7">
        <div className="flex flex-col gap-[11px]">
          <label htmlFor="campo" className={labelClass}>Com base no campo</label>
          <Select id="campo" value="Soma de Populacao" className="w-full" />
        </div>
        <div className="flex flex-col gap-[11px]">
          <label htmlFor="resumo" className={labelClass}>Resumo</label>
          <Select id="resumo" value="Soma" className="w-full" />
        </div>
        <div className="flex flex-col gap-[11px]">
          <label htmlFor="padrao" className="flex items-center gap-2 text-[15px] leading-6 text-[#333]">
            Formatação padrão
            <svg viewBox="0 0 12 12" className="h-3 w-3" fill="none" stroke="#555"><circle cx="6" cy="6" r="5.400" /><path d="M6 5v4M6 3v1" /></svg>
          </label>
          <Select id="padrao" value="Como zero" className="mr-[49px]" />
        </div>
      </div>
      <div className="mt-7 grid grid-cols-3 gap-x-7">
        {stops.map((s) => (
          <div key={s.id}>
            <label htmlFor={s.id} className={labelClass}>{s.label}</label>
            <div className="mt-[11px] flex gap-[5px]">
              <Select id={s.id} value={s.value} tight className="flex-1" />
              <button aria-label={`Cor: ${s.label}`} className="flex h-[28px] w-[44px] items-center gap-2 border border-[#444] pb-0.5 pl-[3px]">
                <span className={`h-[17px] w-[17px] border border-[#444] ${s.color}`} />
                <svg viewBox="0 0 8 5" className="mt-0.5 h-[5px] w-2"><path d="M0 0h8L4 4.500z" fill="#777" /></svg>
              </button>
            </div>
            <input type="text" disabled aria-label={`Valor: ${s.label}`} placeholder="Inserir um valor" className="mt-[5px] block h-[30px] w-[134px] border border-[#8a8a8a] bg-[#eaeae4] px-1 text-[12px] placeholder:text-[#8a8a88]" />
          </div>
        ))}
      </div>
      <label className="mt-[18px] flex items-center gap-2 text-[13px] leading-5 text-[#444]">
        <span className="relative flex h-4 w-4">
          <input type="checkbox" defaultChecked className="h-4 w-4 appearance-none bg-[#f7be09]" />
          <svg viewBox="0 0 16 16" className="pointer-events-none absolute inset-0"><path d="M4 8l3 3 5-6" fill="none" stroke="#333" strokeWidth="1.400" /></svg>
        </span>
        Divergente
      </label>
      <div className="mr-2 mt-[18px] h-7 shrink-0 border border-[#7d7d7d] bg-[linear-gradient(to_right,#dceffe,#ddab00,#0a84ff)]" />
      <div className="mt-auto flex items-center pr-2.5">
        <a href="#saiba-mais" className="text-[12px] text-[#2b3bd0] underline">Saiba mais</a>
        <button className="ml-auto h-[23px] w-[61px] bg-[#f7be09] text-[11px] text-[#333]">OK</button>
        <button className="ml-[18px] h-[23px] w-[61px] border border-[#8a8a8a] bg-white text-[11px] text-[#333]">Cancelar</button>
      </div>
      <span className="pointer-events-none absolute left-[277px] top-[266px] h-12 w-12 rounded-full bg-[radial-gradient(closest-side,rgba(240,230,60,0.75)_50%,rgba(240,230,60,0)_100%)]" />
      <svg viewBox="0 0 14 21" className="pointer-events-none absolute left-[300px] top-[288px] h-[21px] w-3.5" aria-hidden="true"><path d="M1 1v16l4-3.500 2.500 6 2.500-1-2.500-6h5z" fill="#fbf7a8" stroke="#666" strokeWidth="1.200" /></svg>
    </div>
  );
}

export default function App() {
  return (
    <div className="relative flex h-screen flex-col overflow-hidden border-r border-black bg-[#f2f1ef] font-['Open_Sans','Noto_Sans',sans-serif]">
      <TitleBar />
      <Tabs />
      <Ribbon />
      <div className="flex min-h-0 flex-1">
        <LeftRail />
        <Canvas />
        <Visualizations />
        <Fields />
      </div>
      <footer className="relative flex h-[21px] shrink-0 items-center border-t border-[#d8d7d5] pl-0.5 pt-0.5 text-[12px] text-[#4b4a48]">
        Página 1 de 1
        <span className="absolute -top-[3px] left-[78px] h-0.5 w-[128px] bg-[linear-gradient(to_right,#d9bf5e_68%,#f5d15c_68%)]" />
        <span className="absolute bottom-1.5 right-1 flex items-center gap-1 text-[11px] font-semibold leading-4 text-white [text-shadow:0_0_2px_#888]">
          <svg viewBox="0 0 20 16" className="h-4 w-5 drop-shadow-[0_0_1px_#888]" fill="none" stroke="#fff" strokeWidth="2.500" aria-hidden="true"><path d="M1 8c3-1 5-4 6-6-1 4-3 11 0 12s5-6 7-12c-1 5-2 11 0 12s3-1 5-3" /></svg>
          Udemy
        </span>
      </footer>
      <Dialog />
      <button aria-label="Reproduzir" className="absolute left-[482px] top-[378px] h-24 w-24 rounded-full bg-black/32">
        <svg viewBox="0 0 96 96" className="h-24 w-24"><path d="M35 26.500L74 48 35 70.500z" fill="#fff" fillOpacity=".95" /></svg>
      </button>
    </div>
  );
}
